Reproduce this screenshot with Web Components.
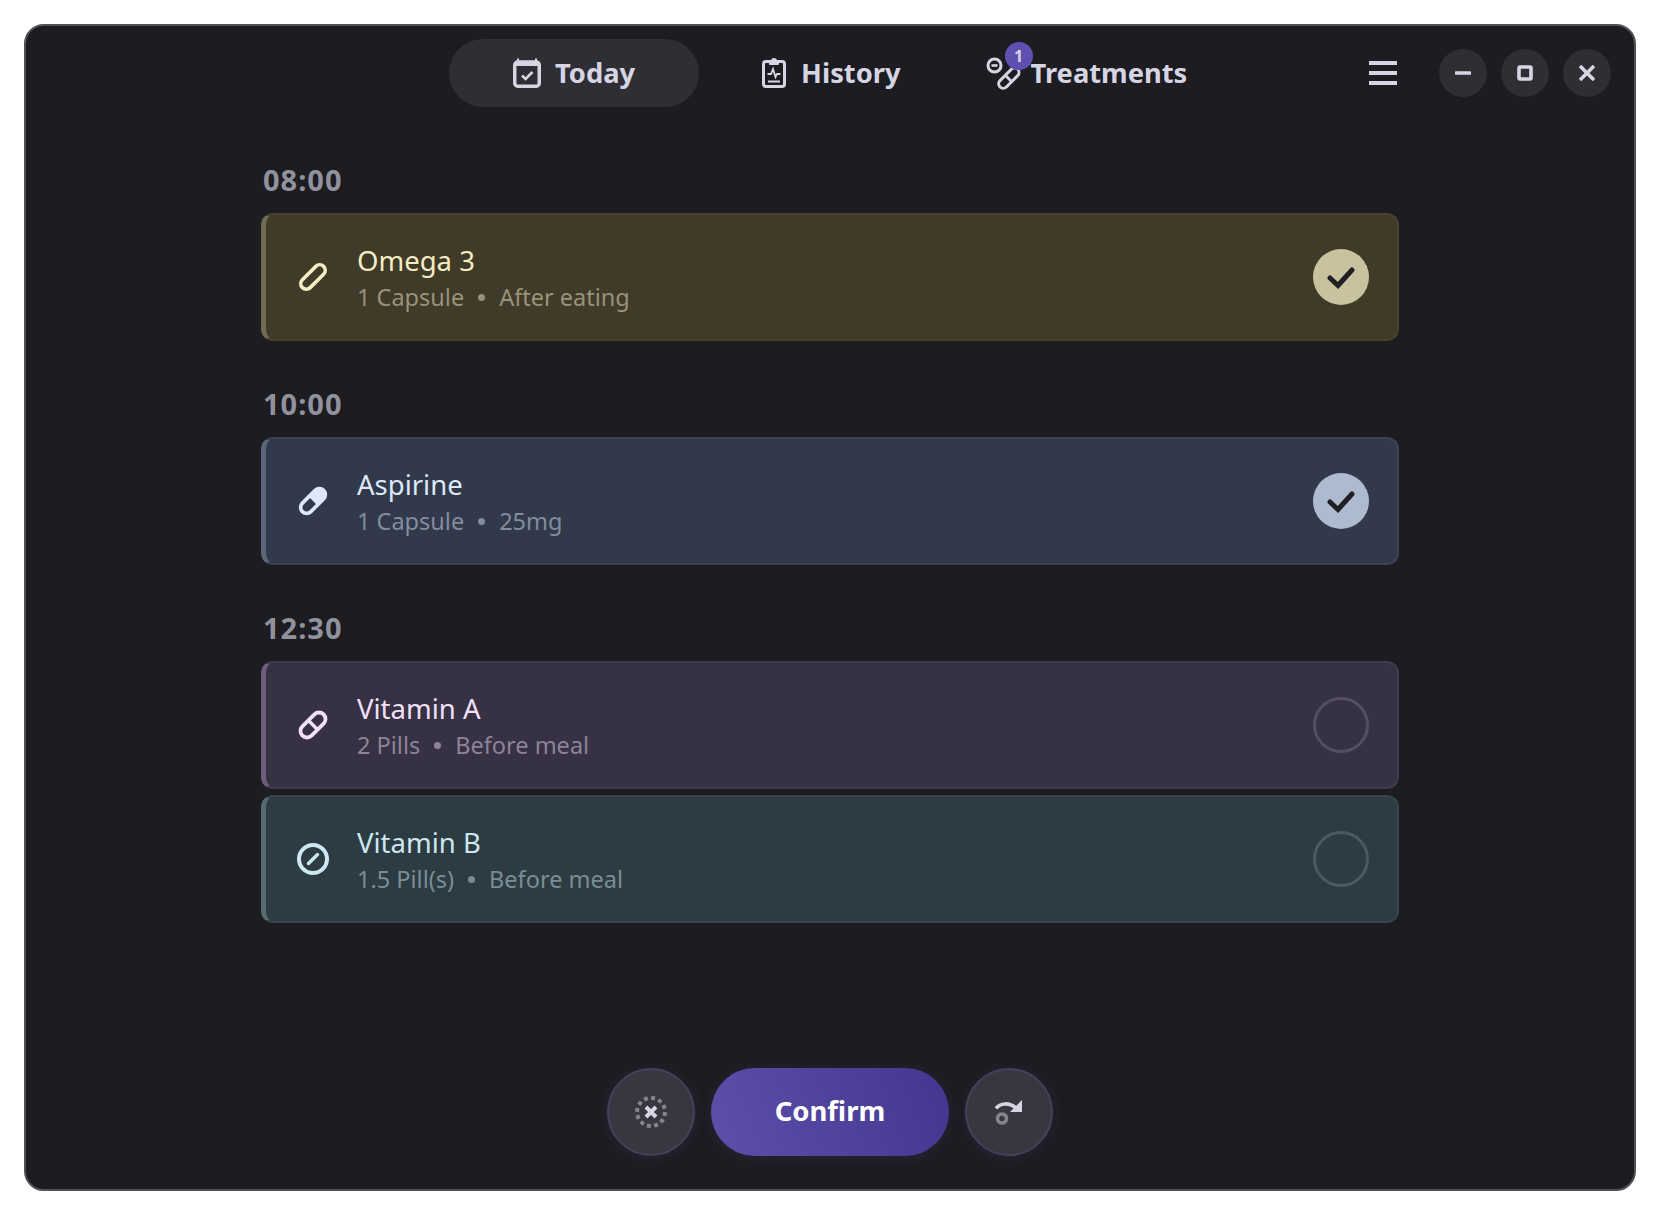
<!DOCTYPE html>
<html lang="en">
<head>
<meta charset="utf-8">
<title>Today</title>
<style>
  html, body { margin: 0; background: #fff; }
  body { font-family: "Noto Sans", "Liberation Sans", sans-serif; }
</style>
</head>
<body>
<app-window>
  <app-header slot="header"></app-header>
  <time-group label="08:00">
    <dose-card tone="yellow" icon="capsule-outline" name="Omega 3" amount="1 Capsule" note="After eating" checked></dose-card>
  </time-group>
  <time-group label="10:00">
    <dose-card tone="blue" icon="capsule-half" name="Aspirine" amount="1 Capsule" note="25mg" checked></dose-card>
  </time-group>
  <time-group label="12:30">
    <dose-card tone="purple" icon="capsule-split" name="Vitamin A" amount="2 Pills" note="Before meal"></dose-card>
    <dose-card tone="teal" icon="tablet" name="Vitamin B" amount="1.5 Pill(s)" note="Before meal"></dose-card>
  </time-group>
  <action-bar slot="footer"></action-bar>
</app-window>

<script>
class AppWindow extends HTMLElement {
    constructor() {
        super();
        this.attachShadow({ mode: 'open' });
        this.shadowRoot.innerHTML = `
        <style>
          :host {
            display: block;
            width: 1612px;
            height: 1167px;
            margin: 24px 0 0 24px;
            box-sizing: border-box;
            background: #1c1c21;
            border: 2px solid #505056;
            border-radius: 20px;
            color: #d6d5e3;
          }
          .frame { display: flex; flex-direction: column; height: 100%; }
          .list {
            flex: 1;
            width: 1138px;
            align-self: center;
            display: flex;
            flex-direction: column;
            gap: 45px;
            padding-top: 55px;
          }
          .foot { padding-bottom: 33px; }
        </style>
        <div class="frame">
          <slot name="header"></slot>
          <div class="list"><slot></slot></div>
          <div class="foot"><slot name="footer"></slot></div>
        </div>`;
    }
}

const TAB_ICONS = {
    today: `<svg width="28" height="30" viewBox="0 0 28 30" fill="none" stroke="currentColor">
      <rect x="1.75" y="4" width="24.5" height="24.25" rx="3" stroke-width="3.5"/>
      <rect x="2" y="3" width="24" height="5" fill="currentColor" stroke="none"/>
      <path d="M5 .5v3M23 .5v3" stroke-width="2"/>
      <path d="M9 17.5l3.6 3.5L19.5 14" stroke-width="2.6"/>
    </svg>`,
    history: `<svg width="24" height="30" viewBox="0 0 24 30" fill="none" stroke="currentColor">
      <rect x="1.5" y="3.5" width="21" height="25" rx="2.5" stroke-width="3"/>
      <rect x="7" y="3" width="10" height="4" rx="1" fill="currentColor" stroke="none"/>
      <circle cx="12" cy="3" r="3" fill="currentColor" stroke="none"/>
      <path d="M5.5 16h3.5l2-5 2.5 8 1.5-3h3.5" stroke-width="1.8"/>
      <path d="M6 23.5h12" stroke-width="2"/>
    </svg>`,
    treatments: `<svg width="33" height="33" viewBox="0 0 33 33" fill="none" stroke="currentColor">
      <circle cx="7.5" cy="8.5" r="6.5" stroke-width="3"/>
      <path d="M4.5 8.5h6" stroke-width="2.6"/>
      <g transform="rotate(-45 21.5 21.5)">
        <rect x="9.5" y="17" width="25" height="9" rx="4.5" stroke-width="3"/>
        <path d="M21.5 17v9" stroke-width="2.8"/>
      </g>
    </svg>`
};

class NavTab extends HTMLElement {
    connectedCallback() {
        const icon = this.getAttribute('icon');
        this.attachShadow({ mode: 'open' });
        this.shadowRoot.innerHTML = `
        <style>
          :host {
            display: flex;
            align-items: center;
            height: 68px;
            padding: 0 64px;
            gap: 14px;
            border-radius: 34px;
            font-size: 27.3px;
            font-weight: 700;
            color: #d6d5e3;
          }
          :host([active]) { background: #2e2e33; }
          svg { display: block; flex: none; overflow: visible; }
          .icon { position: relative; display: flex; }
          .label { margin-top: -2px; }
          .badge {
            position: absolute;
            left: 18px;
            top: -15px;
            width: 28px;
            height: 28px;
            border-radius: 50%;
            background: #5f50b0;
            color: #d6d5e3;
            font-size: 16px;
            line-height: 28px;
            text-align: center;
          }
        </style>
        <span class="icon">${TAB_ICONS[icon]}${this.hasAttribute('badge') ? `<span class="badge">${this.getAttribute('badge')}</span>` : ''}</span>
        <span class="label"><slot></slot></span>`;
    }
}

const WIN_ICONS = {
    min: '<path d="M1 8h14" stroke-width="3.4" stroke-linecap="round"/>',
    max: '<rect x="2" y="2" width="12" height="12" rx="1" stroke-width="3.6"/>',
    close: '<path d="M1 1l14 14M15 1L1 15" stroke-width="3.6"/>'
};

class WinButton extends HTMLElement {
    connectedCallback() {
        this.attachShadow({ mode: 'open' });
        this.shadowRoot.innerHTML = `
        <style>
          :host {
            display: flex;
            width: 48px;
            height: 48px;
            border-radius: 50%;
            background: #2e2e33;
            align-items: center;
            justify-content: center;
            color: #d6d5e3;
          }
        </style>
        <svg width="16" height="16" viewBox="0 0 16 16" fill="none" stroke="currentColor">${WIN_ICONS[this.getAttribute('kind')]}</svg>`;
    }
}

class AppHeader extends HTMLElement {
    constructor() {
        super();
        this.attachShadow({ mode: 'open' });
        this.shadowRoot.innerHTML = `
        <style>
          :host { display: block; }
          .bar {
            display: flex;
            align-items: center;
            padding: 13px 23px 0 423px;
          }
          .tabs { display: flex; align-items: center; }
          .tail { margin-left: auto; display: flex; align-items: center; }
          .menu { display: block; margin-right: 42px; color: #d6d5e3; }
          .wins { display: flex; gap: 14px; }
        </style>
        <div class="bar">
          <div class="tabs">
            <nav-tab icon="today" active>Today</nav-tab>
            <nav-tab icon="history" style="padding-left: 63px; gap: 15px">History</nav-tab>
            <nav-tab icon="treatments" badge="1" style="padding-left: 22px; gap: 11px">Treatments</nav-tab>
          </div>
          <div class="tail">
            <svg class="menu" width="28" height="24" viewBox="0 0 28 24" fill="currentColor">
              <rect y="0" width="28" height="4"/><rect y="10" width="28" height="4"/><rect y="20" width="28" height="4"/>
            </svg>
            <div class="wins">
              <win-button kind="min"></win-button>
              <win-button kind="max"></win-button>
              <win-button kind="close"></win-button>
            </div>
          </div>
        </div>`;
    }
}

class TimeGroup extends HTMLElement {
    connectedCallback() {
        this.attachShadow({ mode: 'open' });
        this.shadowRoot.innerHTML = `
        <style>
          :host { display: block; }
          h2 {
            margin: 0 0 15px 2px;
            font-size: 29px;
            line-height: 36px;
            font-weight: 700;
            letter-spacing: 1px;
            color: #92919e;
          }
          .cards { display: flex; flex-direction: column; gap: 6px; }
        </style>
        <h2>${this.getAttribute('label')}</h2>
        <div class="cards"><slot></slot></div>`;
    }
}

const TONES = {
    yellow: { bg: '#403a28', edge: '#47412e', bar: '#706b52', text: '#f4edc4', sub: '#98927a', check: '#c9c29f', ring: '#5f5a45' },
    blue:   { bg: '#31394a', edge: '#3b4355', bar: '#5c6679', text: '#dde8f8', sub: '#838c9e', check: '#aebacf', ring: '#555e70' },
    purple: { bg: '#363143', edge: '#403b4e', bar: '#6d5f7c', text: '#f1e0f8', sub: '#8d8399', check: '#b5a8c4', ring: '#534e60' },
    teal:   { bg: '#2d3b42', edge: '#37454c', bar: '#556a71', text: '#cce8f1', sub: '#7a8d95', check: '#a6bec7', ring: '#4b5a61' }
};

const DOSE_ICONS = {
    'capsule-outline': `<g transform="rotate(-45 16 16)"><rect x="1" y="10.5" width="30" height="11" rx="5.5" stroke-width="3.6"/></g>`,
    'capsule-half': `<g transform="rotate(-45 16 16)"><rect x="1" y="10" width="30" height="12" rx="6" stroke-width="3.6"/><path d="M16 9h9a7 7 0 0 1 0 14h-9z" fill="currentColor" stroke="none"/></g>`,
    'capsule-split': `<g transform="rotate(-45 16 16)"><rect x="1" y="9.5" width="30" height="13" rx="6.5" stroke-width="3.8"/><path d="M16 9v14" stroke-width="3.4"/></g>`,
    tablet: `<circle cx="16" cy="16" r="14" stroke-width="4"/><path d="M11.5 20.5l9-9" stroke-width="3.4" stroke-linecap="round"/>`
};

class DoseCard extends HTMLElement {
    connectedCallback() {
        const t = TONES[this.getAttribute('tone')];
        const checked = this.hasAttribute('checked');
        this.attachShadow({ mode: 'open' });
        this.shadowRoot.innerHTML = `
        <style>
          :host {
            display: flex;
            align-items: center;
            height: 128px;
            box-sizing: border-box;
            padding: 0 28px 0 31px;
            background: ${t.bg};
            border: 2px solid ${t.edge};
            border-left: 5px solid ${t.bar};
            border-radius: 12px;
          }
          svg { display: block; flex: none; }
          .icon { color: ${t.text}; margin-right: 28px; }
          .text { flex: 1; min-width: 0; padding-top: 3px; }
          .name { font-size: 27.5px; line-height: 36px; color: ${t.text}; }
          .sub { font-size: 23.5px; line-height: 34px; margin-top: 1px; color: ${t.sub}; display: flex; }
          .dot { width: 7px; height: 7px; border-radius: 50%; background: ${t.sub}; align-self: center; margin: 0 14px; }
          .mark {
            width: 56px;
            height: 56px;
            box-sizing: border-box;
            border-radius: 50%;
            display: flex;
            align-items: center;
            justify-content: center;
            flex: none;
          }
          .mark.on { background: ${t.check}; }
          .mark.off { border: 3.5px solid ${t.ring}; }
        </style>
        <svg class="icon" width="32" height="32" viewBox="0 0 32 32" fill="none" stroke="currentColor" style="overflow: visible">${DOSE_ICONS[this.getAttribute('icon')]}</svg>
        <div class="text">
          <div class="name">${this.getAttribute('name')}</div>
          <div class="sub"><span>${this.getAttribute('amount')}</span><span class="dot"></span><span>${this.getAttribute('note')}</span></div>
        </div>
        <div class="mark ${checked ? 'on' : 'off'}">
          ${checked ? '<svg width="28" height="24" viewBox="0 0 28 24" fill="none" stroke="#1f1f24" stroke-width="5" stroke-linecap="round" stroke-linejoin="miter"><path d="M3 13l8 7.5L25 5"/></svg>' : ''}
        </div>`;
    }
}

class RoundAction extends HTMLElement {
    constructor() {
        super();
        this.attachShadow({ mode: 'open' });
        this.shadowRoot.innerHTML = `
        <style>
          :host {
            display: flex;
            width: 88px;
            height: 88px;
            box-sizing: border-box;
            border-radius: 50%;
            background: #38363f;
            border: 2px solid #44415a;
            box-shadow: 0 2px 14px rgba(70, 65, 110, 0.28);
            align-items: center;
            justify-content: center;
          }
        </style>
        <slot></slot>`;
    }
}

class ConfirmButton extends HTMLElement {
    constructor() {
        super();
        this.attachShadow({ mode: 'open' });
        this.shadowRoot.innerHTML = `
        <style>
          :host {
            display: flex;
            width: 238px;
            height: 88px;
            border-radius: 44px;
            align-items: center;
            justify-content: center;
            background: linear-gradient(70deg, #5e50aa, #423690);
            box-shadow: 0 2px 14px rgba(70, 65, 110, 0.28);
            color: #fff;
            font-size: 27.5px;
            font-weight: 700;
          }
          span { margin-top: -3px; }
        </style>
        <span><slot></slot></span>`;
    }
}

class ActionBar extends HTMLElement {
    constructor() {
        super();
        this.attachShadow({ mode: 'open' });
        const dots = [];
        for (let i = 0; i < 12; i++) {
            const a = (i / 12) * 2 * Math.PI + 0.15;
            const x = 16 + 14 * Math.cos(a);
            const y = 16 + 14 * Math.sin(a);
            dots.push(`<rect x="${x - 2}" y="${y - 2}" width="4" height="4" fill="#85848f" transform="rotate(${(a * 180) / Math.PI} ${x} ${y})"/>`);
        }
        this.shadowRoot.innerHTML = `
        <style>
          :host { display: flex; justify-content: center; gap: 16px; }
          svg { display: block; }
        </style>
        <round-action>
          <svg width="32" height="32" viewBox="0 0 32 32" fill="none">
            ${dots.join('')}
            <path d="M11 11l10 10M21 11L11 21" stroke="#d6d5e3" stroke-width="4"/>
          </svg>
        </round-action>
        <confirm-button>Confirm</confirm-button>
        <round-action>
          <svg width="30" height="26" viewBox="0 0 30 26" fill="none">
            <circle cx="8" cy="19.5" r="4.5" stroke="#85848f" stroke-width="3.6"/>
            <path d="M2 9.5C6 4 15 3 22 9" stroke="#d6d5e3" stroke-width="3.6"/>
            <path d="M28 1v12H16z" fill="#d6d5e3"/>
          </svg>
        </round-action>`;
    }
}

customElements.define('app-window', AppWindow);
customElements.define('nav-tab', NavTab);
customElements.define('win-button', WinButton);
customElements.define('app-header', AppHeader);
customElements.define('time-group', TimeGroup);
customElements.define('dose-card', DoseCard);
customElements.define('round-action', RoundAction);
customElements.define('confirm-button', ConfirmButton);
customElements.define('action-bar', ActionBar);
</script>
</body>
</html>
